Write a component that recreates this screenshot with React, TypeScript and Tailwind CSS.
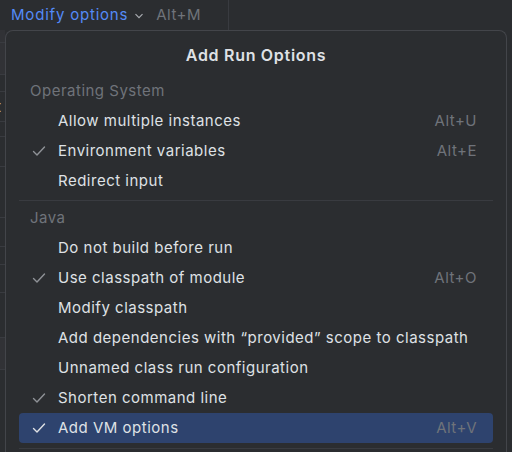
import { Fragment } from "react";

type Item = { label: string; checked?: boolean; shortcut?: string; selected?: boolean };

const sections: { title: string; items: Item[] }[] = [
  {
    title: "Operating System",
    items: [
      { label: "Allow multiple instances", shortcut: "Alt+U" },
      { label: "Environment variables", checked: true, shortcut: "Alt+E" },
      { label: "Redirect input" },
    ],
  },
  {
    title: "Java",
    items: [
      { label: "Do not build before run" },
      { label: "Use classpath of module", checked: true, shortcut: "Alt+O" },
      { label: "Modify classpath" },
      { label: "Add dependencies with \u201cprovided\u201d scope to classpath" },
      { label: "Unnamed class run configuration" },
      { label: "Shorten command line", checked: true },
      { label: "Add VM options", checked: true, shortcut: "Alt+V", selected: true },
    ],
  },
];

function Check({ light }: { light?: boolean }) {
  return (
    <svg width="14" height="14" viewBox="0 0 14 14" fill="none">
      <path
        d="M1.5 7.5l3.5 3.5L12.5 3"
        stroke={light ? "#dfe1e5" : "#8f9297"}
        strokeWidth="1.4"
        strokeLinecap="round"
        strokeLinejoin="round"
      />
    </svg>
  );
}

function Row({ item }: { item: Item }) {
  return (
    <div
      className={`flex h-[30px] items-center rounded-[4px] pl-[13px] pr-[16px] ${
        item.selected ? "bg-[#2e436e]" : ""
      }`}
    >
      <div className="w-[26px] flex items-center">{item.checked && <Check light={item.selected} />}</div>
      <span className="flex-1 text-[#dfe1e5]">{item.label}</span>
      {item.shortcut && <span className="text-[#6f737a]">{item.shortcut}</span>}
    </div>
  );
}

export default function App() {
  return (
    <div
      className="w-[512px] h-[452px] overflow-hidden bg-[#2b2d30] text-[15px] tracking-[0.5px]"
      style={{ fontFamily: "Inter, 'Noto Sans', sans-serif" }}
    >
      {/* toolbar */}
      <div className="flex h-[30px] items-center pl-[11px]">
        <span className="text-[15px] tracking-[0.8px] text-[#548af7]">Modify options</span>
        <svg width="10" height="10" viewBox="0 0 10 10" className="ml-[6px] mt-[1px]">
          <path d="M1.5 3.2L5 6.7l3.5-3.5" stroke="#a8abb0" strokeWidth="1.2" fill="none" />
        </svg>
        <span className="ml-[12px] text-[#6f737a]">Alt+M</span>
        <div className="ml-[27px] h-full w-px bg-[#393b40]" />
      </div>

      <div className="flex">
        {/* content behind the popup */}
        <div className="w-[5px] shrink-0 overflow-hidden text-[#dfe1e5]">
          <div className="h-[13px] border-b border-[#393b40] bg-[#313236]" />
          <div className="h-[32px] border-b border-[#393b40] bg-[#313236]" />
          <div className="h-[17px] border-b border-[#393b40]" />
          <div className="h-[30px] border-b border-[#393b40] leading-[30px] -ml-[4px]">t</div>
          <div className="h-[15px] border-b border-[#393b40]" />
          <div className="h-[30px] border-b border-[#393b40]" />
          <div className="h-[51px] border-b border-[#393b40]" />
          <div className="h-[29px] border-b border-[#393b40]" />
          <div className="h-[18px] border-b border-[#393b40]" />
          <div className="h-[28px] border-b border-[#393b40]" />
          <div className="h-[45px] border-b border-[#393b40]" />
          <div className="h-[32px] border-b border-[#393b40] bg-[#313236]" />
        </div>

        {/* popup */}
        <div className="w-[502px] h-[440px] shrink-0 rounded-t-[8px] border border-b-0 border-[#43454a] bg-[#2b2d30] px-[13px]">
          <div className="pt-[12px] h-[45px] text-center font-semibold text-[16px] tracking-[0.7px] text-[#dfe1e5] leading-[24px]">
            Add Run Options
          </div>
          {sections.map((s, i) => (
            <Fragment key={s.title}>
              {i > 0 && <div className="mt-[4px] mb-[2px] h-px bg-[#393b40]" />}
              <div className="flex h-[30px] items-center pl-[11px] text-[#6f737a]">{s.title}</div>
              {s.items.map((it) => (
                <Row key={it.label} item={it} />
              ))}
            </Fragment>
          ))}
          <div className="mt-[5px] h-px bg-[#393b40]" />
        </div>
      </div>
    </div>
  );
}
